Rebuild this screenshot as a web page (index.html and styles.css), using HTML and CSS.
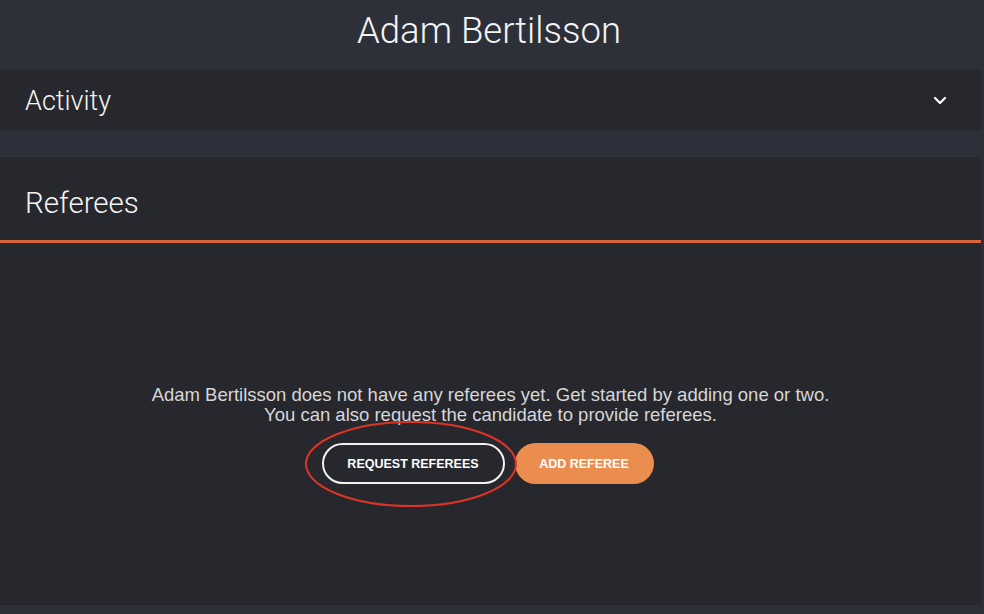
FILE: index.html
```html
<!DOCTYPE html>
<html>
<head>
<meta charset="utf-8">
<link rel="stylesheet" href="styles.css">
</head>
<body>
<div class="page">
  <header class="title">Adam Bertilsson</header>
  <section class="activity">
    <span class="activity-label">Activity</span>
    <svg class="chevron" width="14" height="9" viewBox="0 0 14 9"><path d="M2 2 L7 7 L12 2" fill="none" stroke="#ffffff" stroke-width="2.2" stroke-linecap="round" stroke-linejoin="round"/></svg>
  </section>
  <section class="card">
    <div class="card-head">Referees</div>
    <div class="card-body">
      <p class="msg">Adam Bertilsson does not have any referees yet. Get started by adding one or two.<br>You can also request the candidate to provide referees.</p>
      <div class="actions">
        <div class="req-wrap">
          <button class="btn btn-outline">REQUEST REFEREES</button>
          <svg class="circle" width="214" height="88" viewBox="0 0 214 88"><ellipse cx="107" cy="44" rx="105" ry="42" fill="none" stroke="#dd3426" stroke-width="2"/></svg>
        </div>
        <button class="btn btn-fill">ADD REFEREE</button>
      </div>
    </div>
  </section>
</div>
</body>
</html>
```
FILE: styles.css
```css
html, body {
  margin: 0;
  padding: 0;
  background: #2d3039;
}
.page {
  width: 984px;
  height: 614px;
  overflow: hidden;
  background: #2d3039;
  font-family: "Liberation Sans", Arial, sans-serif;
}
.title {
  height: 70px;
  display: flex;
  align-items: center;
  justify-content: center;
  color: #f4f4f4;
  font-family: Roboto, "Liberation Sans", sans-serif;
  font-weight: 300;
  font-size: 36.5px;
  padding: 0 6px 10px 0;
  box-sizing: border-box;
}
.activity {
  width: 981px;
  height: 60px;
  background: #27282d;
  display: flex;
  align-items: center;
  justify-content: space-between;
  padding: 0 34px 0 25px;
  box-sizing: border-box;
}
.activity-label {
  color: #f4f4f4;
  font-family: Roboto, "Liberation Sans", sans-serif;
  font-weight: 300;
  font-size: 27px;
  padding-top: 2px;
}
.chevron {
  display: block;
}
.card {
  margin-top: 27px;
  width: 981px;
  height: 448px;
  background: #27282d;
  display: flex;
  flex-direction: column;
}
.card-head {
  height: 86px;
  border-bottom: 3px solid #d9643c;
  display: flex;
  align-items: center;
  padding: 9px 25px 0;
  box-sizing: border-box;
  color: #f4f4f4;
  font-family: Roboto, "Liberation Sans", sans-serif;
  font-weight: 300;
  font-size: 29.5px;
}
.card-body {
  display: flex;
  flex-direction: column;
  align-items: center;
  padding-top: 142px;
}
.msg {
  margin: 0;
  text-align: center;
  color: #d6d6d8;
  font-size: 18.5px;
  line-height: 20px;
}
.actions {
  margin-top: 18px;
  display: flex;
  gap: 10px;
  margin-left: -6px;
}
.req-wrap {
  position: relative;
}
.btn {
  height: 41px;
  border-radius: 21px;
  font-family: "Liberation Sans", Arial, sans-serif;
  font-weight: 700;
  font-size: 12.5px;
  color: #ffffff;
  box-sizing: border-box;
  cursor: pointer;
}
.btn-outline {
  width: 183px;
  background: transparent;
  border: 2px solid #f2f2f2;
}
.btn-fill {
  width: 139px;
  background: #ec8d50;
  border: none;
}
.circle {
  position: absolute;
  left: -18px;
  top: -23px;
  pointer-events: none;
}
```
